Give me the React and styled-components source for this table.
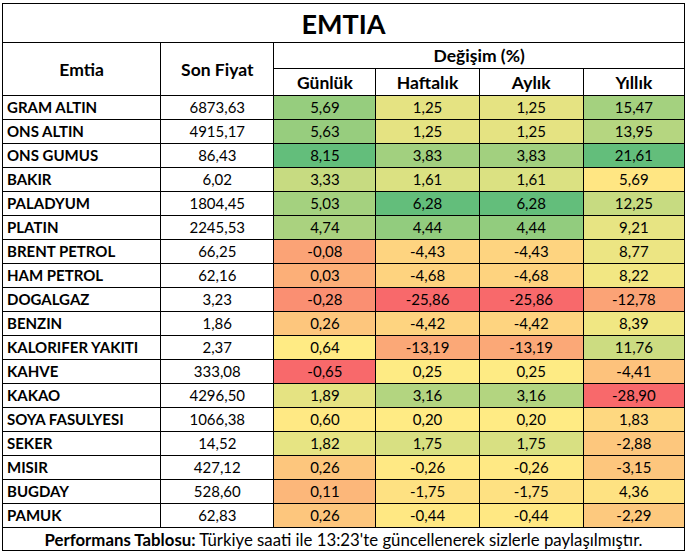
import React from "react";
import styled, { createGlobalStyle } from "styled-components";

const GlobalStyle = createGlobalStyle`
  html, body {
    margin: 0;
    padding: 0;
    background: #ffffff;
  }
  body {
    font-family: Lato, "Open Sans", "Liberation Sans", sans-serif;
    color: #000000;
  }
`;

const rows = [
  ["GRAM ALTIN", "6873,63", 5.69, 1.25, 1.25, 15.47],
  ["ONS ALTIN", "4915,17", 5.63, 1.25, 1.25, 13.95],
  ["ONS GUMUS", "86,43", 8.15, 3.83, 3.83, 21.61],
  ["BAKIR", "6,02", 3.33, 1.61, 1.61, 5.69],
  ["PALADYUM", "1804,45", 5.03, 6.28, 6.28, 12.25],
  ["PLATIN", "2245,53", 4.74, 4.44, 4.44, 9.21],
  ["BRENT PETROL", "66,25", -0.08, -4.43, -4.43, 8.77],
  ["HAM PETROL", "62,16", 0.03, -4.68, -4.68, 8.22],
  ["DOGALGAZ", "3,23", -0.28, -25.86, -25.86, -12.78],
  ["BENZIN", "1,86", 0.26, -4.42, -4.42, 8.39],
  ["KALORIFER YAKITI", "2,37", 0.64, -13.19, -13.19, 11.76],
  ["KAHVE", "333,08", -0.65, 0.25, 0.25, -4.41],
  ["KAKAO", "4296,50", 1.89, 3.16, 3.16, -28.9],
  ["SOYA FASULYESI", "1066,38", 0.6, 0.2, 0.2, 1.83],
  ["SEKER", "14,52", 1.82, 1.75, 1.75, -2.88],
  ["MISIR", "427,12", 0.26, -0.26, -0.26, -3.15],
  ["BUGDAY", "528,60", 0.11, -1.75, -1.75, 4.36],
  ["PAMUK", "62,83", 0.26, -0.44, -0.44, -2.29],
];

// Excel-style 3 colour scale: min red, 50th percentile yellow, max green
const RED = [248, 105, 107];
const YELLOW = [255, 235, 132];
const GREEN = [99, 190, 123];

const mix = (a, b, t) =>
  "rgb(" + a.map((c, i) => Math.round(c + (b[i] - c) * t)).join(",") + ")";

const makeScale = (values) => {
  const s = [...values].sort((a, b) => a - b);
  const min = s[0];
  const max = s[s.length - 1];
  const pos = (s.length - 1) * 0.5;
  const lo = Math.floor(pos);
  const mid = s[lo] + (s[Math.ceil(pos)] - s[lo]) * (pos - lo);
  return (v) => {
    if (v <= mid) return mix(RED, YELLOW, mid === min ? 1 : (v - min) / (mid - min));
    return mix(YELLOW, GREEN, max === mid ? 0 : (v - mid) / (max - mid));
  };
};

const scales = [2, 3, 4, 5].map((c) => makeScale(rows.map((r) => r[c])));

const fmt = (n) => n.toFixed(2).replace(".", ",");

const Page = styled.div`
  padding: 3px 0 0 2px;
`;

const Table = styled.table`
  border-collapse: collapse;
  width: 683px;
  table-layout: fixed;
  border: 1px solid #000;
`;

const Cell = styled.td`
  border: 1px solid #000;
  padding: 0;
  height: 23px;
  font-size: 15px;
  line-height: 23px;
  text-align: center;
  white-space: nowrap;
  background: ${({ $bg }) => $bg || "#ffffff"};
`;

const NameCell = styled(Cell)`
  text-align: left;
  padding-left: 4px;
  font-weight: 700;
`;

const TitleCell = styled.th`
  border: 1px solid #000;
  height: 38px;
  padding: 0;
  font-size: 27px;
  font-weight: 700;
  text-align: center;
`;

const HeadCell = styled.th`
  border: 1px solid #000;
  padding: 0;
  height: ${({ $h }) => $h || 25}px;
  font-size: 17.5px;
  font-weight: 700;
  text-align: center;
  vertical-align: middle;
`;

const FooterCell = styled.td`
  border: 1px solid #000;
  padding: 0;
  height: 22px;
  font-size: 16.8px;
  text-align: center;
  white-space: nowrap;
`;

const widths = [158, 113, 102, 103, 104, 101];

export default function App() {
  return (
    <Page>
      <GlobalStyle />
      <Table>
        <colgroup>
          {widths.map((w, i) => (
            <col key={i} style={{ width: w }} />
          ))}
        </colgroup>
        <thead>
          <tr>
            <TitleCell colSpan={6}>EMTIA</TitleCell>
          </tr>
          <tr>
            <HeadCell rowSpan={2}>Emtia</HeadCell>
            <HeadCell rowSpan={2}>Son Fiyat</HeadCell>
            <HeadCell colSpan={4} $h={25}>Değişim (%)</HeadCell>
          </tr>
          <tr>
            <HeadCell $h={26}>Günlük</HeadCell>
            <HeadCell $h={26}>Haftalık</HeadCell>
            <HeadCell $h={26}>Aylık</HeadCell>
            <HeadCell $h={26}>Yıllık</HeadCell>
          </tr>
        </thead>
        <tbody>
          {rows.map((r) => (
            <tr key={r[0]}>
              <NameCell>{r[0]}</NameCell>
              <Cell>{r[1]}</Cell>
              {[2, 3, 4, 5].map((c, i) => (
                <Cell key={c} $bg={scales[i](r[c])}>
                  {fmt(r[c])}
                </Cell>
              ))}
            </tr>
          ))}
          <tr>
            <FooterCell colSpan={6}>
              <b>Performans Tablosu:</b> Türkiye saati ile 13:23'te güncellenerek sizlerle paylaşılmıştır.
            </FooterCell>
          </tr>
        </tbody>
      </Table>
    </Page>
  );
}
